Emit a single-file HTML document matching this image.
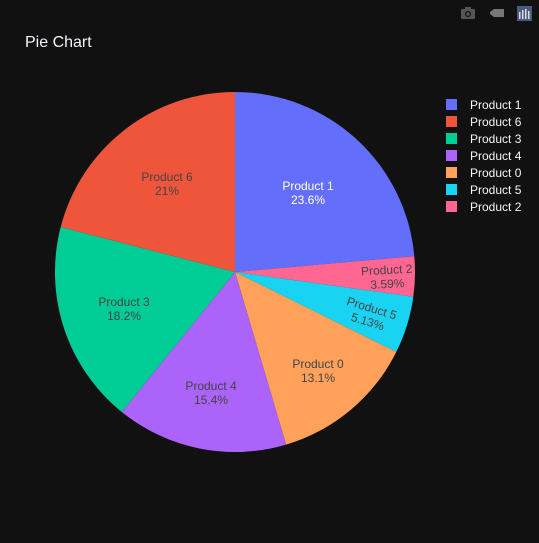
<!DOCTYPE html>
<html><head><meta charset="utf-8"><style>
html,body{margin:0;padding:0;background:#111;}
body{width:539px;height:543px;overflow:hidden;position:relative;font-family:"Liberation Sans",sans-serif;}
svg{position:absolute;left:0;top:0;}
text{font-family:"Liberation Sans",sans-serif;}
</style></head><body>
<svg width="539" height="543" viewBox="0 0 539 543">
<rect width="539" height="543" fill="#111"/>
<text x="25" y="47" font-size="16" fill="#f2f5fa">Pie Chart</text>
<g stroke="#444" stroke-width="0">
<path d="M235,272 L235,92 A180,180 0 0 1 414.3,256.2 Z" fill="#636efa"/>
<path d="M235,272 L414.3,256.2 A180,180 0 0 1 413.3,296.7 Z" fill="#FF6692"/>
<path d="M235,272 L413.3,296.7 A180,180 0 0 1 396.3,351.9 Z" fill="#19d3f3"/>
<path d="M235,272 L396.3,351.9 A180,180 0 0 1 286.1,444.6 Z" fill="#FFA15A"/>
<path d="M235,272 L286.1,444.6 A180,180 0 0 1 121.8,412.0 Z" fill="#ab63fa"/>
<path d="M235,272 L121.8,412.0 A180,180 0 0 1 60.7,227.0 Z" fill="#00cc96"/>
<path d="M235,272 L60.7,227.0 A180,180 0 0 1 235,92 Z" fill="#EF553B"/>
</g>
<g font-size="12" text-anchor="middle" fill="#444">
<text x="308" y="190" fill="#fff">Product 1</text>
<text x="308" y="204" fill="#fff">23.6%</text>
<text x="167" y="181">Product 6</text>
<text x="167" y="195">21%</text>
<text x="124" y="306">Product 3</text>
<text x="124" y="320">18.2%</text>
<text x="211" y="390">Product 4</text>
<text x="211" y="404">15.4%</text>
<text x="318" y="368">Product 0</text>
<text x="318" y="382">13.1%</text>
<g transform="translate(387,276) rotate(-3)"><text x="0" y="-2">Product 2</text><text x="0" y="12">3.59%</text></g>
<g transform="translate(370,314) rotate(17)"><text x="0" y="-2">Product 5</text><text x="0" y="12">5.13%</text></g>
</g>
<g font-size="12" fill="#f2f5fa">
<rect x="446" y="99" width="11" height="11" fill="#636efa"/><text x="470" y="109">Product 1</text>
<rect x="446" y="116" width="11" height="11" fill="#EF553B"/><text x="470" y="126">Product 6</text>
<rect x="446" y="133" width="11" height="11" fill="#00cc96"/><text x="470" y="143">Product 3</text>
<rect x="446" y="150" width="11" height="11" fill="#ab63fa"/><text x="470" y="160">Product 4</text>
<rect x="446" y="167" width="11" height="11" fill="#FFA15A"/><text x="470" y="177">Product 0</text>
<rect x="446" y="184" width="11" height="11" fill="#19d3f3"/><text x="470" y="194">Product 5</text>
<rect x="446" y="201" width="11" height="11" fill="#FF6692"/><text x="470" y="211">Product 2</text>
</g>
<!-- modebar -->
<g fill="#555">
<rect x="461" y="9" width="14" height="10" rx="1"/>
<rect x="465" y="7" width="6" height="3"/>
<circle cx="468" cy="14" r="3" fill="#111"/>
<circle cx="468" cy="14" r="1.8" fill="#555"/>
<path d="M490,12 L494,9 L504,9 L504,17 L494,17 L490,14 Z" fill="#777"/>
</g>
<rect x="517" y="6" width="15" height="15" fill="#4a5a80"/>
<g fill="#ddd">
<rect x="519" y="12" width="1.5" height="7"/><rect x="522" y="10" width="1.5" height="9"/>
<rect x="525" y="9" width="1.5" height="10"/><rect x="528" y="11" width="1.5" height="8"/>
</g>
</svg>
</body></html>
